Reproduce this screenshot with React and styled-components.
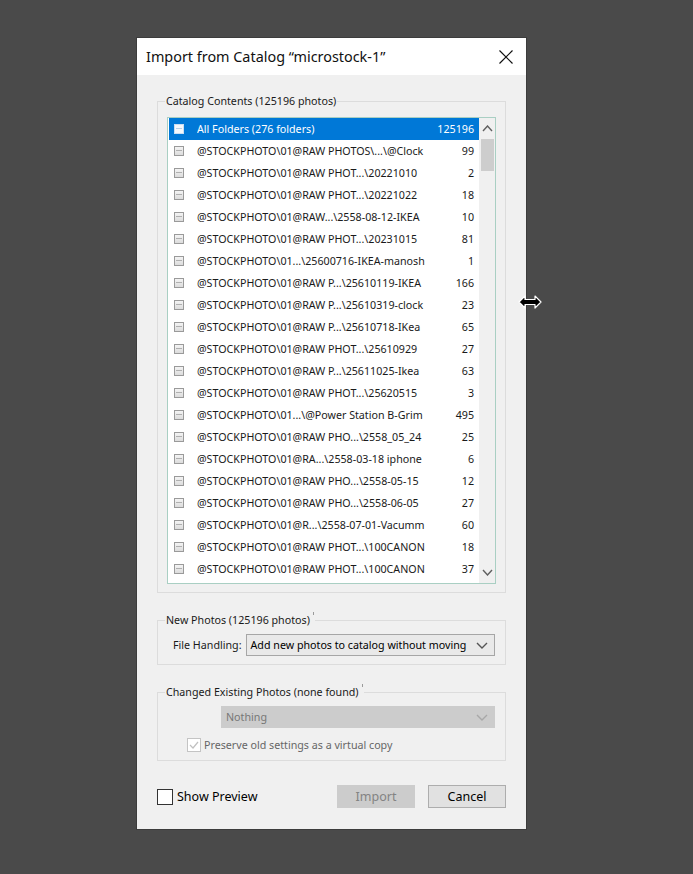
import React from 'react';
import styled, { createGlobalStyle } from 'styled-components';

const GlobalStyle = createGlobalStyle`
  html, body {
    margin:0;
    padding:0;
    background:#4a4a4a;
  }
  body {
    font-family:"Noto Sans", "Open Sans", sans-serif;
  }
`;

const Page = styled.div`
  width:693px;
  height:874px;
  padding:38px 0 0 137px;
  box-sizing:border-box;
  position:relative;
  overflow:hidden;
`;

const Dialog = styled.div`
  width:389px;
  height:791px;
  display:flex;
  flex-direction:column;
  background:#f0f0f0;
  box-shadow:0 0 0 1px #3c3c3c;
`;

const TitleBar = styled.div`
  height:37px;
  flex:none;
  display:flex;
  align-items:center;
  justify-content:space-between;
  background:#fff;
  padding:0 13px 0 9px;
`;

const Title = styled.span`
  font-size:14.4px;
  color:#111;
`;

const Body = styled.div`
  flex:1;
  display:flex;
  flex-direction:column;
  padding:18px 20px 21px 20px;
  font-size:10.7px;
  color:#000;
`;

const Group = styled.fieldset`
  margin:0 0 ${p => p.$gap || 0}px 0;
  padding:${p => p.$pad};
  border:1px solid #dcdcdc;
  min-width:0;
`;

const Legend = styled.legend`
  padding:0 1px;
  margin-left:-2px;
  line-height:16px;
  color:#1a1a1a;
`;

const Tick = styled.span`
  display:inline-block;
  width:1px;
  height:3px;
  margin-left:3px;
  vertical-align:top;
  background:#9a9a9a;
`;

const ListBox = styled.div`
  height:467px;
  border:1px solid #a9cfc3;
  background:#fff;
  display:flex;
  box-sizing:border-box;
`;

const Rows = styled.div`
  flex:1;
  padding:0 0 0 1px;
  overflow:hidden;
`;

const Row = styled.div`
  height:22px;
  display:flex;
  align-items:center;
  padding:0 5px 0 5px;
  background:${p => p.$selected ? '#0078d7' : 'transparent'};
  color:${p => p.$selected ? '#fff' : '#1a1a1a'};
`;

const Box = styled.span`
  width:10px;
  height:10px;
  flex:none;
  box-sizing:border-box;
  border:1px solid ${p => p.$selected ? '#c9def3' : '#9a9a9a'};
  background:${p => p.$selected ? '#f4f8fc' : 'linear-gradient(#f4f4f4, #dcdcdc)'};
  position:relative;
  &::after {
    content:'';
    position:absolute;
    left:1px;
    right:1px;
    top:3px;
    height:1px;
    background:${p => p.$selected ? '#b8cfe6' : '#b0b0b0'};
  }
`;

const Name = styled.span`
  flex:1;
  margin-left:13px;
  white-space:nowrap;
  overflow:hidden;
`;

const Count = styled.span`
  flex:none;
  margin-left:6px;
  text-align:right;
`;

const ScrollBar = styled.div`
  width:16px;
  flex:none;
  background:#f0f0f0;
  display:flex;
  flex-direction:column;
  align-items:center;
`;

const Arrow = styled.div`
  height:21px;
  width:16px;
  display:flex;
  align-items:center;
  justify-content:center;
  flex:none;
`;

const Track = styled.div`
  flex:1;
  width:16px;
  display:flex;
  justify-content:center;
`;

const Thumb = styled.div`
  width:13px;
  height:32px;
  background:#cdcdcd;
`;

const FieldRow = styled.div`
  display:flex;
  align-items:center;
  padding-left:${p => p.$indent || 0}px;
`;

const Label = styled.span`
  margin-right:4px;
  color:#1a1a1a;
  white-space:nowrap;
`;

const Select = styled.div`
  flex:1;
  height:22px;
  box-sizing:border-box;
  display:flex;
  align-items:center;
  justify-content:space-between;
  padding:0 6px 0 4px;
  white-space:nowrap;
  border:1px solid ${p => p.$disabled ? '#cccccc' : '#a6a6a6'};
  background:${p => p.$disabled ? '#cccccc' : '#e9e9e9'};
  color:${p => p.$disabled ? '#777' : '#000'};
`;

const CheckRow = styled.div`
  display:flex;
  align-items:center;
  margin-top:${p => p.$top || 0}px;
  padding-left:${p => p.$indent || 0}px;
  color:${p => p.$disabled ? '#666' : '#000'};
  font-size:${p => p.$big ? '12.5px' : 'inherit'};
`;

const CheckBox = styled.span`
  width:${p => p.$size}px;
  height:${p => p.$size}px;
  box-sizing:border-box;
  flex:none;
  border:1px solid ${p => p.$disabled ? '#c4c4c4' : '#333'};
  background:#fff;
  margin-right:${p => p.$gap}px;
  display:flex;
  align-items:center;
  justify-content:center;
`;

const Footer = styled.div`
  margin-top:auto;
  display:flex;
  align-items:center;
`;

const Spacer = styled.div`
  flex:1;
`;

const Button = styled.button`
  width:78px;
  height:23px;
  margin-left:${p => p.$gap || 0}px;
  font-family:inherit;
  font-size:12.5px;
  border:1px solid ${p => p.$disabled ? '#cccccc' : '#adadad'};
  background:${p => p.$disabled ? '#cccccc' : '#e1e1e1'};
  color:${p => p.$disabled ? '#838383' : '#000'};
  padding:0;
`;

const Cursor = styled.svg`
  position:absolute;
  left:518px;
  top:295px;
`;

const rows = [
  ['@STOCKPHOTO\\01@RAW PHOTOS\\...\\@Clock', 99],
  ['@STOCKPHOTO\\01@RAW PHOT...\\20221010', 2],
  ['@STOCKPHOTO\\01@RAW PHOT...\\20221022', 18],
  ['@STOCKPHOTO\\01@RAW...\\2558-08-12-IKEA', 10],
  ['@STOCKPHOTO\\01@RAW PHOT...\\20231015', 81],
  ['@STOCKPHOTO\\01...\\25600716-IKEA-manosh', 1],
  ['@STOCKPHOTO\\01@RAW P...\\25610119-IKEA', 166],
  ['@STOCKPHOTO\\01@RAW P...\\25610319-clock', 23],
  ['@STOCKPHOTO\\01@RAW P...\\25610718-IKea', 65],
  ['@STOCKPHOTO\\01@RAW PHOT...\\25610929', 27],
  ['@STOCKPHOTO\\01@RAW P...\\25611025-Ikea', 63],
  ['@STOCKPHOTO\\01@RAW PHOT...\\25620515', 3],
  ['@STOCKPHOTO\\01...\\@Power Station B-Grim', 495],
  ['@STOCKPHOTO\\01@RAW PHO...\\2558_05_24', 25],
  ['@STOCKPHOTO\\01@RA...\\2558-03-18 iphone', 6],
  ['@STOCKPHOTO\\01@RAW PHO...\\2558-05-15', 12],
  ['@STOCKPHOTO\\01@RAW PHO...\\2558-06-05', 27],
  ['@STOCKPHOTO\\01@R...\\2558-07-01-Vacumm', 60],
  ['@STOCKPHOTO\\01@RAW PHOT...\\100CANON', 18],
  ['@STOCKPHOTO\\01@RAW PHOT...\\100CANON', 37],
];

const Chevron = ({ up, color = '#606060', w = 9, h = 5 }) => (
  <svg width={w + 2} height={h + 2} viewBox={`-1 -1 ${w + 2} ${h + 2}`}>
    <polyline
      points={up ? `0,${h} ${w / 2},0 ${w},${h}` : `0,0 ${w / 2},${h} ${w},0`}
      fill="none" stroke={color} strokeWidth="1.4" />
  </svg>
);

const App = () => {
  return <Page>
    <GlobalStyle />
    <Dialog>
      <TitleBar>
        <Title>Import from Catalog “microstock-1”</Title>
        <svg width="14" height="14" viewBox="0 0 14 14">
          <path d="M0.5 0.5 L13.5 13.5 M13.5 0.5 L0.5 13.5" stroke="#111" strokeWidth="1.2" />
        </svg>
      </TitleBar>
      <Body>
        <Group $pad="8px 9px 8px 9px" $gap={19}>
          <Legend>Catalog Contents (125196 photos)</Legend>
          <ListBox>
            <Rows>
              <Row $selected>
                <Box $selected />
                <Name>All Folders (276 folders)</Name>
                <Count>125196</Count>
              </Row>
              {rows.map(([name, count], i) => (
                <Row key={i}>
                  <Box />
                  <Name>{name}</Name>
                  <Count>{count}</Count>
                </Row>
              ))}
            </Rows>
            <ScrollBar>
              <Arrow><Chevron up /></Arrow>
              <Track><Thumb /></Track>
              <Arrow><Chevron /></Arrow>
            </ScrollBar>
          </ListBox>
        </Group>

        <Group $pad="6px 10px 8px 9px" $gap={19}>
          <Legend>New Photos (125196 photos)<Tick /></Legend>
          <FieldRow $indent={6}>
            <Label>File Handling:</Label>
            <Select>
              <span>Add new photos to catalog without moving</span>
              <Chevron color="#555" w={10} h={5} />
            </Select>
          </FieldRow>
        </Group>

        <Group $pad="6px 10px 8px 9px">
          <Legend>Changed Existing Photos (none found)<Tick /></Legend>
          <FieldRow $indent={54}>
            <Select $disabled>
              <span>Nothing</span>
              <Chevron color="#a8a8a8" w={10} h={5} />
            </Select>
          </FieldRow>
          <CheckRow $disabled $top={10} $indent={20}>
            <CheckBox $size={14} $gap={3} $disabled>
              <svg width="10" height="8" viewBox="0 0 10 8">
                <polyline points="1,4 4,7 9,1" fill="none" stroke="#c0c0c0" strokeWidth="1.2" />
              </svg>
            </CheckBox>
            Preserve old settings as a virtual copy
          </CheckRow>
        </Group>

        <Footer>
          <CheckRow $big>
            <CheckBox $size={16} $gap={4} />
            Show Preview
          </CheckRow>
          <Spacer />
          <Button $disabled>Import</Button>
          <Button $gap={13}>Cancel</Button>
        </Footer>
      </Body>
    </Dialog>
    <Cursor width="24" height="14" viewBox="0 0 24 14">
      <path d="M1 7 L7 1 L7 4.5 L17 4.5 L17 1 L23 7 L17 13 L17 9.5 L7 9.5 L7 13 Z"
        fill="#000" stroke="#fff" strokeWidth="1.2" strokeLinejoin="round" />
    </Cursor>
  </Page>;
};

export default App;
